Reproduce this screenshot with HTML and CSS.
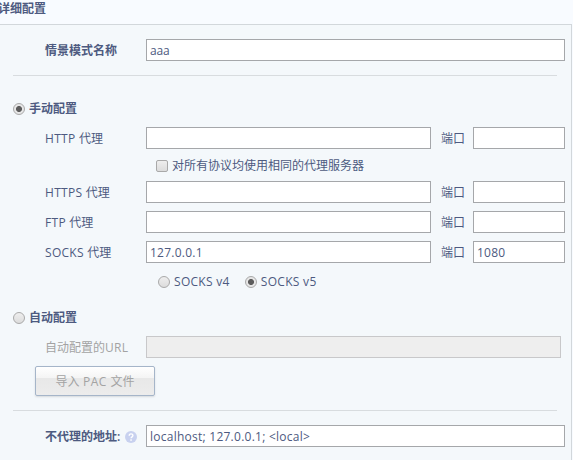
FILE: index.html
```html
<!DOCTYPE html>
<html lang="zh-CN">
<head>
<meta charset="utf-8">
<title>详细配置</title>
<link rel="stylesheet" href="styles.css">
</head>
<body>
<h1 class="heading">详细配置</h1>
<form class="panel">
  <div class="row row-name">
    <label class="label bold" for="name">情景模式名称</label>
    <input class="field wide" id="name" type="text" value="aaa">
  </div>
  <hr class="rule">
  <label class="mode mode-manual"><input class="radio" type="radio" name="mode" checked><span>手动配置</span></label>
  <div class="row">
    <label class="label"><span class="latin">HTTP </span>代理</label>
    <input class="field host" type="text">
    <label class="port-label">端口</label>
    <input class="field port" type="text">
  </div>
  <label class="same"><input class="check" type="checkbox"><span>对所有协议均使用相同的代理服务器</span></label>
  <div class="row gap">
    <label class="label"><span class="latin">HTTPS </span>代理</label>
    <input class="field host" type="text">
    <label class="port-label">端口</label>
    <input class="field port" type="text">
  </div>
  <div class="row gap">
    <label class="label"><span class="latin">FTP </span>代理</label>
    <input class="field host" type="text">
    <label class="port-label">端口</label>
    <input class="field port" type="text">
  </div>
  <div class="row">
    <label class="label"><span class="latin">SOCKS </span>代理</label>
    <input class="field host" type="text" value="127.0.0.1">
    <label class="port-label">端口</label>
    <input class="field port" type="text" value="1080">
  </div>
  <div class="versions">
    <label class="version"><input class="radio" type="radio" name="socks"><span class="latin">SOCKS v4</span></label>
    <label class="version"><input class="radio" type="radio" name="socks" checked><span class="latin">SOCKS v5</span></label>
  </div>
  <label class="mode mode-auto"><input class="radio" type="radio" name="mode"><span>自动配置</span></label>
  <div class="row">
    <label class="label muted">自动配置的<span class="latin">URL</span></label>
    <input class="field url" type="text" disabled>
  </div>
  <button class="import" type="button" disabled>导入<span class="latin pac"> PAC </span>文件</button>
  <hr class="rule">
  <div class="row row-bypass">
    <label class="label bold" for="bypass">不代理的地址:
      <svg class="help" width="12" height="12" viewBox="0 0 12 12"><circle cx="6" cy="6" r="6" fill="#c8d1ef"/><path d="M4.2 4.7C4.2 2.3 7.9 2.3 7.9 4.6C7.9 5.9 6.1 5.8 6.1 7.3" fill="none" stroke="#fff" stroke-width="1.4"/><rect x="5.3" y="8.3" width="1.5" height="1.5" fill="#fff"/></svg>
    </label>
    <input class="field wide" id="bypass" type="text" value="localhost; 127.0.0.1; &lt;local&gt;">
  </div>
</form>
</body>
</html>
```
FILE: styles.css
```css
* { box-sizing: border-box; }
body {
  margin: 0;
  height: 460px;
  overflow: hidden;
  background: #f8fbff;
  color: #4d5a80;
  font: 12px/18px "Open Sans", "Noto Sans CJK SC", sans-serif;
}
.heading {
  margin: 0 0 0 -2px;
  height: 24px;
  font-size: 12px;
  line-height: 18px;
  font-weight: 600;
}
.panel {
  width: 572px;
  height: 436px;
  padding: 14px 6px 0 13px;
  border: 1px solid #d2d7db;
  border-width: 1px 1px 0 0;
  background: #f4f8fb;
}
.row {
  display: flex;
  align-items: center;
  height: 22px;
  padding-left: 32px;
}
.gap { margin-bottom: 8px; }
.label {
  display: flex;
  align-items: center;
  flex: 0 0 101px;
  padding-top: 2px;
  white-space: pre;
}
.latin { letter-spacing: .3px; }
.label .latin, .pac { white-space: pre; }
.bold { font-weight: 600; white-space: nowrap; }
.muted { color: #a3a3a3; }
.field {
  flex: none;
  height: 22px;
  margin: 0;
  padding: 0 3px;
  border: 1px solid #a5a7aa;
  border-radius: 0;
  background: #fff;
  color: inherit;
  font: inherit;
  letter-spacing: .25px;
}
#name { letter-spacing: -.2px; }
.wide { width: 419px; }
.host { width: 285px; }
.port { width: 92px; }
.url {
  width: 415px;
  border-color: #c8c8ca;
  background: #eee;
}
.port-label {
  flex: none;
  width: 42px;
  padding: 2px 0 0 10px;
}
.rule {
  height: 1px;
  width: 544px;
  margin: 14px 0 0;
  border: 0;
  background: #d8dcdf;
}
.mode {
  display: flex;
  align-items: center;
  height: 18px;
  gap: 4px;
  font-weight: 600;
}
.mode-manual { margin: 24px 0 9px; }
.mode-auto { margin: 14px 0 9px; }
.radio, .check {
  appearance: none;
  flex: none;
  width: 12px;
  height: 12px;
  margin: 0;
  border: 1px solid #a9a9a9;
  background: linear-gradient(#eee, #dcdcdc);
}
.radio { border-radius: 50%; }
.radio:checked { background: radial-gradient(circle, #5c5c5c 0 2.6px, #e6e6e6 3.4px); }
.check { border-radius: 2px; }
.same {
  display: flex;
  align-items: center;
  gap: 4px;
  height: 32px;
  padding: 1px 0 0 143px;
}
.versions {
  display: flex;
  gap: 15px;
  height: 32px;
  padding: 10px 0 0 145px;
}
.version {
  display: flex;
  align-items: center;
  gap: 4px;
  height: 18px;
}
.import {
  display: block;
  width: 120px;
  height: 30px;
  margin: 8px 0 0 22px;
  padding: 2px 0 0;
  border: 1px solid #a5b5c9;
  border-radius: 2px;
  background: linear-gradient(#fff 0, #f4f4f4 40%, #e8e8e8 41%, #ececec 100%);
  box-shadow: 0 1px 2px #d5d9dc;
  color: #a3a3a3;
  font: inherit;
}
.pac { letter-spacing: .5px; }
.row-bypass { margin-top: 14px; }
.help { margin: -1px 0 0 5px; }
```
